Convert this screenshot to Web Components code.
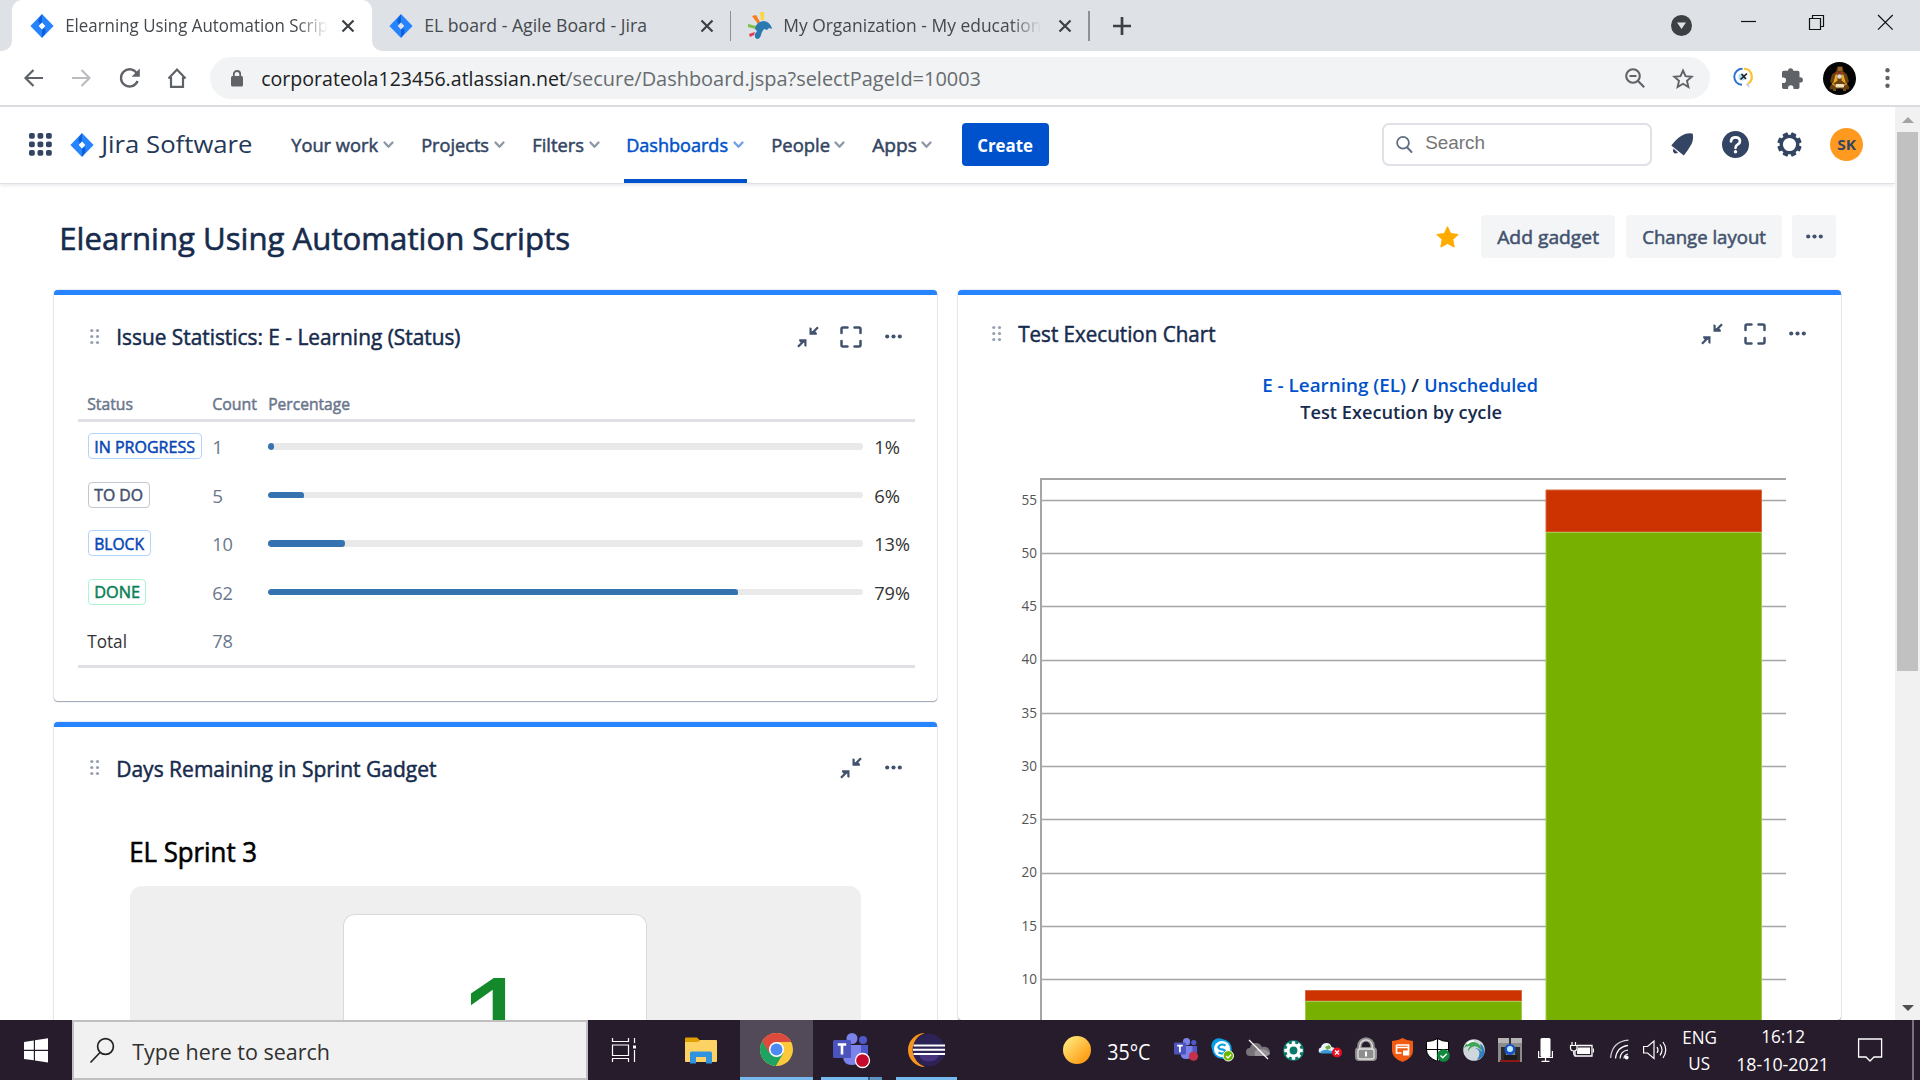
<!DOCTYPE html>
<html lang="en">
<head>
<meta charset="utf-8">
<title>Elearning Using Automation Scripts</title>
<style>
html,body{margin:0;padding:0}
body{width:1920px;height:1080px;overflow:hidden;background:#fff;font-family:"Open Sans","Noto Sans",sans-serif;color:#172b4d}
</style>
</head>
<body>
<desktop-screen></desktop-screen>
<script>
/* ---------- helpers ---------- */
const base = `*{box-sizing:border-box}svg{display:block;flex:none;overflow:visible}
.row{display:flex;align-items:center}.row>*{flex:none}.c{display:flex;align-items:center;justify-content:center}`;
function component(name, build) {
  customElements.define(name, class extends HTMLElement {
    constructor() { super(); this.attachShadow({ mode: 'open' }); }
    connectedCallback() {
      const t = document.createElement('template');
      t.innerHTML = '<style>' + base + '</style>' + build(this);
      this.shadowRoot.replaceChildren(t.content.cloneNode(true));
    }
  });
}
/* text run set to a fixed measure; weight 500 is regular with a thin outline */
const t = (text, w, size, o = {}) =>
  `<fit-text w="${w}" style="font-size:${size}px;font-weight:${o.b == 500 ? 400 : o.b || 400};${o.b == 500 ? `-webkit-text-stroke:${size > 25 ? .6 : .5}px currentColor;` : ''}${o.c ? `color:${o.c};` : ''}${o.dy ? `margin-top:${o.dy * 2}px;` : ''}${o.s || ''}">${text}</fit-text>`;
/* flex children from [start, width, html] entries, spaced by margins */
const spaced = (items, start = 0) => {
  let end = start;
  return items.map(([x, w, html]) => {
    const m = x - end; end = x + w;
    return `<div class="row" style="margin-left:${m.toFixed(1)}px;width:${w}px">${html}</div>`;
  }).join('');
};
const svg = (w, h, inner, vb) => `<svg width="${w}" height="${h}" viewBox="${vb || `0 0 ${w} ${h}`}" fill="none">${inner}</svg>`;

const jiraLogo = svg(24, 24, `<path fill="#2684ff" fill-rule="evenodd" d="M12 0 23.6 12 12 24 .4 12ZM12 8.500 8.700 12l3.300 3.500 3.300-3.500Z"/><path fill="#0f5fd8" d="M12 .6V8l-2 2.1C7.600 7.600 7.700 5 12 .6ZM12 23.400V16l2-2.100c2.400 2.500 2.300 5.100-2 9.500Z"/>`);
const closeX = svg(14, 14, `<path d="M1.500 1.500l11 11M12.500 1.500l-11 11" stroke="#3c4043" stroke-width="2.200"/>`);
const chevron = c => svg(11, 8, `<path d="M1.500 1.500 5.500 5.700l4-4.200" stroke="${c}" stroke-width="2.300" stroke-linecap="round" stroke-linejoin="round"/>`);
const dots3 = (c = '#42526e') => svg(17, 5, `<g fill="${c}"><circle cx="2.200" cy="2.500" r="2.100"/><circle cx="8.500" cy="2.500" r="2.100"/><circle cx="14.800" cy="2.500" r="2.100"/></g>`);
const drag = svg(10, 16, `<g fill="#97a0af">${[1.5, 7.5, 13.5].map(y => `<circle cx="1.800" cy="${y}" r="1.600"/><circle cx="7.500" cy="${y}" r="1.600"/>`).join('')}</g>`);
const collapse = svg(22, 22, `<g stroke="#42526e" stroke-width="2.300" stroke-linejoin="round"><path d="M21 1.200l-6 6M1 20.800l6-6"/></g><g fill="#42526e"><path d="M12.500 1.500q1.200-.4 2.200.8v3.200l3.800 0q2 1.300 1.300 3.200h-7.300ZM9.500 20.500q-1.200.4-2.200-.8v-3.200H3.500q-2-1.300-1.300-3.200h7.300Z"/></g>`);
const full = svg(22, 22, `<path d="M1.500 7V3q0-1.500 1.500-1.500h4.500M14.500 1.500H19q1.500 0 1.500 1.500v4M20.500 15v4q0 1.500-1.500 1.500h-4.500M7.500 20.500H3q-1.500 0-1.500-1.500v-4" stroke="#42526e" stroke-width="2.500" stroke-linecap="round"/>`);

/* ---------- browser tabs ---------- */
const sunLogo = svg(24, 27, `<path fill="#fdd835" d="M12 0h4v8h-3z"/><path fill="#ff7a1a" d="M4 4l4-1 4 7-2 2z"/><path fill="#7bc142" d="M0 12l8 2v3l-8-2z"/><path fill="#e53950" d="M1 22l6-2-1 3-4 2z"/><path fill="#2a7ab0" d="M7 17q1-7 8-8 7 0 9 8l-3-1-2 2-3-1-2 3-1 3q-1 4-4 4-3-1-2-5l2-3z"/>`);
component('browser-tabs', () => `<style>
:host{display:block;height:51px;background:#dee1e6}
.strip{height:51px;position:relative}
.active{width:360px;height:51px;margin-left:12px;background:#fff;border-radius:10px 10px 0 0}
.active::before,.active::after{content:"";position:absolute;bottom:0;width:10px;height:10px}
.active::before{left:2px;background:radial-gradient(circle at 0 0,transparent 9.500px,#fff 10px)}
.active::after{left:372px;background:radial-gradient(circle at 100% 0,transparent 9.500px,#fff 10px)}
.fade{padding:8px 0;-webkit-mask:linear-gradient(90deg,#000 88%,transparent);mask:linear-gradient(90deg,#000 88%,transparent)}
i{width:1.500px;height:30px;background:#8d9095}
</style><div class="row strip"><div class="row active">${spaced([
  [30, 24, jiraLogo], [66, 262, `<span class="fade row">${t('Elearning Using Automation Scrip', 262, 17.5, { c: '#45494d' })}</span>`], [341, 14, closeX]], 12)}</div>${spaced([
  [389, 24, jiraLogo], [425, 222, t('EL board - Agile Board - Jira', 222, 17.5, { c: '#45494d' })], [699.5, 14, closeX], [729.5, 2, '<i></i>'],
  [747.5, 24, sunLogo], [783.5, 257.5, `<span class="fade row">${t('My Organization - My education', 257.5, 17.5, { c: '#45494d' })}</span>`], [1058, 14, closeX], [1088, 2, '<i></i>'],
  [1113, 18, svg(18, 18, '<path d="M9 0v18M0 9h18" stroke="#3c4043" stroke-width="2.700"/>')],
  [1670.5, 21, svg(21, 21, '<circle cx="10.500" cy="10.500" r="10.500" fill="#3c4043"/><path d="M6 7.500h9l-4.500 6.500z" fill="#dee1e6"/>')],
  [1741, 15, svg(15, 15, '<path d="M0 3.500h15" stroke="#111" stroke-width="1.200"/>')],
  [1809, 15, svg(15, 22, '<path d="M.5 3.500h11v11H.5zM3.500 3.500v-3h11v11h-3" stroke="#111" stroke-width="1.200"/>')],
  [1878, 15, svg(15, 22, '<path d="M0 0l14.700 14.700M14.700 0L0 14.700" stroke="#111" stroke-width="1.200"/>')]], 372)}</div>`);

/* ---------- browser toolbar ---------- */
component('browser-toolbar', () => `<style>
:host{display:block;height:56px;background:#fff;border-bottom:2px solid #dadce0}
.bar{height:54px}.omni{height:42px;width:1500px;border-radius:21px;background:#f1f3f4}
</style><div class="row bar">${spaced([
  [23.5, 19, svg(19, 18, '<path d="M19 9H2M9.500 1 1.500 9l8 8" stroke="#5f6368" stroke-width="2.200"/>')],
  [71.5, 19, svg(19, 18, '<path d="M0 9h17M9.500 1l8 8-8 8" stroke="#bbbdc0" stroke-width="2.200"/>')],
  [118.5, 21, svg(21, 20, '<path d="M18 5.500A8.600 8.600 0 1 0 18.600 13" stroke="#5f6368" stroke-width="2.300"/><path d="M20.800.5v8.200h-8.200z" fill="#5f6368"/>')],
  [167, 20, svg(20, 20, '<path d="M1.500 10.500 10 1.500l8.500 9M4 9v9.800h12V9" stroke="#5f6368" stroke-width="2.200"/>')],
  [210, 1500, `<div class="row omni">${spaced([
    [231, 12, svg(12, 17, '<rect y="6" width="12" height="10.500" rx="1.500" fill="#5f6368"/><path d="M2.800 7V4.200a3.200 3.200 0 0 1 6.400 0V7" stroke="#5f6368" stroke-width="1.800"/>')],
    [261.5, 304, t('corporateola123456.atlassian.net', 304, 20, { c: '#202124', dy: .5 })],
    [565.5, 415, t('/secure/Dashboard.jspa?selectPageId=10003', 415, 20, { c: '#686c70', dy: .5 })],
    [1625, 20, svg(20, 20, '<circle cx="8" cy="8" r="6.800" stroke="#5f6368" stroke-width="2.100"/><path d="M4.500 8h7M12.800 12.800l6.400 6.400" stroke="#5f6368" stroke-width="2.100"/>')],
    [1672, 22, svg(22, 21, '<path d="M11 2.500l2.500 5.700 6.200.6-4.700 4.100 1.400 6.100L11 15.800 5.600 19 7 12.900 2.300 8.800l6.200-.6z" stroke="#5f6368" stroke-width="1.900"/>')]], 210)}</div>`],
  [1733.5, 20, svg(20, 22, '<path d="M8.500 1.800A8 8 0 0 0 8 17.800" stroke="#2d6fd2" stroke-width="1.900"/><path d="M10 1.800a8 8 0 0 1 4 14.800" stroke="#fbc02d" stroke-width="2.100"/><circle cx="8" cy="10" r="3.500" fill="#a9dcf7"/><path d="M6.500 12.500l6.500-6M7.500 7l4.500 5" stroke="#222" stroke-width="1.700"/><path d="M11.500 17l4 4-1-5z" fill="#c8c8c8"/>')],
  [1780.5, 22, svg(22, 23, '<path fill="#5f6368" d="M7 3.800a2.600 2.600 0 0 1 5.200 0h4.600q1.700 0 1.700 1.700v4.700h.7a2.700 2.700 0 0 1 0 5.400h-.7v4.700q0 1.700-1.700 1.700h-4.300v-1.100a2.700 2.700 0 0 0-5.400 0V22H2.700Q1 22 1 20.300v-4.200h1.300a2.800 2.800 0 0 0 0-5.600H1v-5q0-1.700 1.700-1.700z"/>')],
  [1822.5, 33, svg(33, 33, '<circle cx="16.500" cy="16.500" r="16.500" fill="#050505"/><path d="M14.500 4.500h5l1 5 3.500 3 2 7-2 2 2.500 4-1 2-9-1-9 1-1-2 2.500-4-2-2 2-7 4-3z" fill="#6b4015"/><path d="M15 5h4v4h-4z" fill="#9a6526"/><path d="M12.500 12.500h2v6l-4.500 3.500zM20.500 12.500h-2v6l4.500 3.500z" fill="#e8a91f"/><circle cx="16.500" cy="14.500" r="2.200" fill="#d9d9e5"/><circle cx="14.300" cy="11" r="1.100" fill="#c9302c"/><circle cx="18.700" cy="11" r="1.100" fill="#c9302c"/><path d="M9 21.500l3 2M24 21.500l-3 2M10 28h3M20 28h3" stroke="#d39a2e" stroke-width="1.200"/><rect x="12.500" y="22" width="8.500" height="3.500" rx="1" fill="#f2e3b8"/>')],
  [1884.5, 5, svg(5, 20, '<g fill="#5f6368"><circle cx="2.500" cy="2.200" r="2.200"/><circle cx="2.500" cy="10" r="2.200"/><circle cx="2.500" cy="17.700" r="2.200"/></g>')]])}</div>`);

/* ---------- Jira navigation ---------- */
component('nav-item', h => `<style>:host{display:block;width:100%}.row{justify-content:space-between;width:100%}</style>
<div class="row">${t(h.getAttribute('label'), h.getAttribute('w'), 17.5, { b: 500, dy: 1, c: h.hasAttribute('on') ? '#0052cc' : '#344563' })}${chevron(h.hasAttribute('on') ? '#6f9fe6' : '#8e97a8')}</div>`);
const navItem = (x, w, end, label, on) => [x, end - x, `<nav-item label="${label}" w="${w}" ${on ? 'on' : ''}></nav-item>`];
const gear = svg(25, 25, `<circle cx="12.500" cy="12.500" r="8.200" stroke="#344563" stroke-width="3.300"/>${[0, 45, 90, 135, 180, 225, 270, 315].map(a => `<rect x="9.800" y=".3" width="5.400" height="4" rx="1" fill="#344563" transform="rotate(${a + 22.5} 12.500 12.500)"/>`).join('')}`);
component('jira-nav', () => `<style>
:host{display:block;height:77px;background:#fff;border-bottom:1px solid #dfe1e6;box-shadow:0 2px 3px rgba(9,30,66,.08)}
.bar{height:75px}
.create{width:87px;height:43px;border-radius:4px;background:#0052cc}
.search{width:270px;height:43px;border:2px solid #dfe1e6;border-radius:7px}
.av{width:33px;height:33px;border-radius:50%;background:#ff991f}
.on{height:76px;border-bottom:4px solid #0052cc;padding:4px 3px 0;width:123px;margin-bottom:-1px}
</style><div class="row bar">${spaced([
  [29, 23, svg(23, 23, `<g fill="#344563">${[0, 8.5, 17].map(y => [0, 8.5, 17].map(x => `<rect x="${x}" y="${y}" width="5.800" height="5.800" rx="1.800"/>`).join('')).join('')}</g>`)],
  [69.5, 24, jiraLogo],
  [101.5, 150.5, t('Jira Software', 150.5, 24, { dy: -.5, c: '#253858' })],
  navItem(292, 86, 394, 'Your work'), navItem(421.5, 67, 505, 'Projects'), navItem(532.5, 51, 600, 'Filters'),
  [624, 123, `<div class="on row"><nav-item label="Dashboards" w="101" on style="width:117px"></nav-item></div>`],
  navItem(771.5, 58, 845, 'People'), navItem(872.5, 44, 932, 'Apps'),
  [962, 87, `<div class="create c">${t('Create', 55, 17.5, { b: 700, dy: 1, c: '#fff' })}</div>`],
  [1382, 270, `<div class="search row">${spaced([
    [1395.5, 17, svg(17, 17, '<circle cx="7" cy="6.800" r="5.900" stroke="#5e6c84" stroke-width="1.800"/><path d="M11.300 11.500l4.200 4.500" stroke="#5e6c84" stroke-width="1.900" stroke-linecap="round"/>')],
    [1426, 59, t('Search', 59, 18.66, { dy: -1.5, c: '#757575', s: "font-family:'Liberation Sans',sans-serif;" })]], 1384)}</div>`],
  [1671, 23, svg(23, 23, '<path fill="#344563" d="M.3 12.500Q7 3.500 14 1q5-1.500 7.800-.2.900 6-1.300 10.200Q17 17.500 12.800 22.500zM2.500 15.500l4.500 4.200q-3 1.700-4.400-.3-1.200-1.700-.1-3.900z"/>')],
  [1722, 27, svg(27, 27, '<circle cx="13.500" cy="13.500" r="13.500" fill="#344563"/><path d="M9 10.300q.3-4 4.500-4t4.500 3.700q0 2-2.200 3.300-2.300 1.300-2.300 3.500" stroke="#fff" stroke-width="2.700" stroke-linecap="round"/><circle cx="13.500" cy="20.700" r="1.700" fill="#fff"/>')],
  [1777, 25, gear],
  [1830, 33, `<div class="av c">${t('SK', 18, 14, { b: 700, c: '#344563' })}</div>`]])}</div>`);

/* ---------- dashboard ---------- */
component('dash-heading', () => `<style>:host{display:block;padding-top:31px}.row{height:43px}.row .row{height:auto}
.btn{width:100%;height:43px;border-radius:4px;background:#f4f5f7}</style><div class="row">${spaced([
  [60, 510, t('Elearning Using Automation Scripts', 510, 31.5, { b: 500, dy: 1.5 })],
  [1436, 23, svg(23, 22, '<path fill="#ffab00" stroke="#ffab00" stroke-width="1" stroke-linejoin="round" d="M11.500.7l3.200 6.800 7.500 1-5.400 5 1.400 7.600-6.700-3.600-6.700 3.600 1.400-7.600-5.400-5 7.500-1z"/>')],
  [1481, 134, `<div class="btn c">${t('Add gadget', 101, 17.5, { b: 500, dy: 1, c: '#42526e' })}</div>`],
  [1626, 156, `<div class="btn c">${t('Change layout', 123, 17.5, { b: 500, dy: 1, c: '#42526e' })}</div>`],
  [1792, 44, `<div class="btn c">${dots3()}</div>`]])}</div>`);

component('gadget-card', h => {
  const hh = h.getAttribute('head'), f = h.hasAttribute('full'), o = +h.getAttribute('nudge') || 0;
  return `<style>:host{display:block;border-top:5px solid #2684ff;border-radius:4px;background:#fff;box-shadow:0 1px 1px rgba(9,30,66,.35),0 0 1.500px rgba(9,30,66,.4)}
.head{height:${hh}px}</style><div class="row head">${spaced([
    [35.5 - o, 10, drag], [62.5 - o, +h.getAttribute('w'), t(h.getAttribute('label'), h.getAttribute('w'), 21, { b: 500, dy: 1.2 })],
    ...(f ? [[742.5, 22, collapse], [785.5, 22, full]] : [[785.5, 22, collapse]]), [831, 17, dots3()]])}</div><slot></slot>`;
});

component('status-row', h => {
  const a = k => h.getAttribute(k), c = a('color');
  return `<style>:host{display:block}.r{height:48.600px}
.badge{height:26px;border:1.500px solid ${a('edge')};border-radius:4px}
.track{width:595px;height:6.500px;border-radius:3.200px;background:#e9e9e9;overflow:hidden}.track div{height:7px;background:#3572b0;border-radius:3.200px;width:${a('fill')}px}</style>
<div class="row r">${spaced([
    [88, +a('bw'), c ? `<div class="badge c" style="width:${a('bw')}px">${t(a('label'), a('tw'), 15.5, { b: 500, c, dy: 1 })}</div>` : t(a('label'), a('tw'), 18.3, { c: '#333', dy: .6 })],
    [213, 20, t(a('count'), a('cw'), 18.3, { c: '#6b778c', dy: .8 })],
    ...(a('pct') ? [[268, 595, '<div class="track"><div></div></div>'], [875, 35, t(a('pct'), a('pw'), 18.3, { c: '#333', dy: .8 })]] : [])], 78)}</div>`;
});
const st = (label, tw, bw, color, edge, count, fill, pct) =>
  `<status-row label="${label}" tw="${tw}" bw="${bw}" color="${color}" edge="${edge}" count="${count}" cw="${count.length * 10}" fill="${fill}" pct="${pct}" pw="${pct.length == 3 ? 35 : 25}"></status-row>`;
component('issue-table', () => `<style>:host{display:block;padding:11px 22px 33px 24px}.h{height:33px;border-bottom:3px solid #dfe1e6}.b{border-bottom:3px solid #dfe1e6}</style>
<div class="row h">${spaced([[88, 45, t('Status', 45, 15.5, { b: 500, c: '#6b778c', dy: 1 })], [213, 44, t('Count', 44, 15.5, { b: 500, c: '#6b778c', dy: 1 })], [268.5, 81, t('Percentage', 81, 15.5, { b: 500, c: '#6b778c', dy: 1 })]], 78)}</div>
<div class="b">${st('IN PROGRESS', 100, 114, '#0747b6', '#b3d4ff', '1', 6, '1%')}${st('TO DO', 48, 62, '#42526e', '#c1c7d0', '5', 36, '6%')}${st('BLOCK', 49, 63, '#0747b6', '#b3d4ff', '10', 77, '13%')}${st('DONE', 45, 58, '#0b7f57', '#abf5d1', '62', 470, '79%')}<status-row label="Total" tw="39" bw="58" count="78" cw="20"></status-row></div>`);

component('sprint-days', () => `<style>:host{display:block;padding:0 76px}.n{height:77px}
.g{height:320px;background:#efefef;border-radius:12px;padding:28px 1px 0 0;display:flex;justify-content:center}
.w{width:304px;border:1.500px solid #dadada;border-bottom:0;border-radius:12px 12px 0 0;background:#fff;padding:41px 0 0 3px;text-align:center;font:140px/140px "Liberation Sans",sans-serif;color:#14892c}</style>
<div class="row n">${t('EL Sprint 3', 127, 26.5, { b: 500, dy: 5, c: '#000' })}</div><div class="g"><div class="w">1</div></div>`);

component('execution-chart', () => {
  let g = '';
  for (let i = 0; i < 10; i++) {
    const y = 500.5 + i * 53.22, v = 55 - i * 5;
    g += `<path d="M1041 ${Math.round(y - .5) + .5}H1786" stroke="#a5a5a5" stroke-width="1.300"/><text x="1037" y="${y + 4.3}" text-anchor="end" textLength="15.500" lengthAdjust="spacingAndGlyphs">${v}</text>`;
  }
  return `<style>:host{display:block}.l{height:27px}text{font:14px "Open Sans",sans-serif;fill:#545454}</style>
<div class="c l" style="padding-left:2px">${t('E - Learning (EL)', 143, 17.5, { b: 600, c: '#0052cc', s: 'margin-right:6px;' })}${t('/', 7, 17.5, { b: 600, s: 'margin-right:6px;' })}${t('Unscheduled', 113, 17.5, { b: 600, c: '#0052cc' })}</div>
<div class="c l" style="padding-left:3px">${t('Test Execution by cycle', 201, 17.5, { b: 600 })}</div>
${svg(883, 594, `${g}<path d="M1786 479H1041V1025" stroke="#a5a5a5" stroke-width="2"/>
<g stroke-width="1"><path d="M1305.500 990.500h216v10.500h-216z" fill="#cc3300" stroke="#d66a3f"/><path d="M1305.500 1001.500h216v30h-216z" fill="#77b000" stroke="#a3c94f"/>
<path d="M1546 490h215.500v42h-215.500z" fill="#cc3300" stroke="#d66a3f"/><path d="M1546 532.500h215.500v500h-215.500z" fill="#77b000" stroke="#a3c94f"/></g>`, '958 426 883 594')}`;
});

component('jira-page', () => `<style>
:host{display:flex;height:913px;overflow:hidden;background:#fff}
main{width:1895px;height:913px;overflow:hidden}
.cols{display:flex;gap:21px;padding:32px 0 0 54px}
.col{width:883px;display:flex;flex-direction:column;gap:21px}
.scroll{width:25px;height:913px;background:#f1f1f1;display:flex;flex-direction:column;align-items:center;padding:10px 0 9px}
.thumb{width:21px;height:539px;background:#c1c1c1;margin:9px 0 auto}
</style><main><jira-nav></jira-nav><dash-heading></dash-heading>
<div class="cols"><div class="col">
<gadget-card head="83" full label="Issue Statistics: E - Learning (Status)" w="343.5"><issue-table></issue-table></gadget-card>
<gadget-card head="82" label="Days Remaining in Sprint Gadget" w="319.5"><sprint-days></sprint-days></gadget-card>
</div><div class="col"><gadget-card head="77" full nudge="2" label="Test Execution Chart" w="196.5"><execution-chart></execution-chart></gadget-card></div></div></main>
<div class="scroll">${svg(12, 6, '<path d="M6 0l6 6H0z" fill="#a3a3a3"/>')}<div class="thumb"></div>${svg(12, 6, '<path d="M0 0h12L6 6z" fill="#505050"/>')}</div>`);

/* ---------- taskbar ---------- */
const teams = (s, dot) => svg(37 * s, 35 * s, `<circle cx="30" cy="7" r="4" fill="#5059c9"/><circle cx="19" cy="5.500" r="5.500" fill="#7b83eb"/><path d="M24 12h11v11q0 5-5 5h-6z" fill="#5059c9"/><path d="M10 12h18v11q0 9-9 9t-9-9z" fill="#7b83eb"/><rect y="7" width="18" height="18" rx="1.500" fill="#4b53bc"/><path d="M4.800 11.500h8.400M9 11.500v10" stroke="#fff" stroke-width="2.600"/><circle cx="29.500" cy="27.500" r="7" fill="${dot}" ${s == 1 ? 'stroke="#fff" stroke-width="1.300"' : ''}/>`, '0 0 37 35');
const chrome = svg(33, 33, `<circle cx="16.500" cy="16.500" r="16.500" fill="#fbc93c"/><path d="M16.500 16.500 2.200 8.200A16.500 16.500 0 0 0 15.800 33l7.500-12.700z" fill="#1ea362"/><path d="M2.200 8.300A16.500 16.500 0 0 1 31.200 9H16.500l-7.300 11z" fill="#dd4b3e"/><circle cx="16.500" cy="16.500" r="7.600" fill="#fff"/><circle cx="16.500" cy="16.500" r="6" fill="#4c8bf5"/>`);
component('task-bar', () => `<style>
:host{display:block;height:60px;background:#271c2c;color:#fff}
.bar{height:60px}
.search{width:516px;height:60px;background:#f1f1f1;border:2px solid #c0c0c0}
.app{height:60px;display:flex;flex-direction:column;align-items:center;justify-content:space-between;width:100%}
.app b{height:3px;width:100%;background:#76b9ed;display:block}.app div{flex:1;display:flex;align-items:center}
.two b{background:linear-gradient(90deg,#76b9ed 47px,#3f5f80 47px,#3f5f80 49px,#5e93c0 49px)}
.stack{display:flex;flex-direction:column;align-items:center;gap:11px;width:100%;padding-top:1px}
</style><div class="row bar">${spaced([
  [24, 24, svg(24, 25, '<path fill="#fff" d="M0 4l9.800-1.500v9.300H0zM11 2.300 24 .3v11.500H11zM0 13h9.800v9.300L0 21zM11 13h13v11.600l-13-2z"/>')],
  [72, 516, `<div class="search row">${spaced([
    [90, 25, svg(25, 25, '<circle cx="15.500" cy="8.500" r="7.900" stroke="#222" stroke-width="1.700"/><path d="M10 14.500.5 24.500" stroke="#222" stroke-width="1.700"/>')],
    [132.5, 197, t('Type here to search', 197, 22, { dy: .8, c: '#303030' })]], 74)}</div>`],
  [612, 24, svg(24, 24, '<g stroke="#fff" stroke-width="1.200"><path d="M.5 0v3.500h16V0M.5 7h16v10.500H.5zM.5 24v-3.500h16V24M22.500 0v5M22.500 12v12"/></g><path d="M21 7.500h3v3h-3z" fill="#fff"/>')],
  [685, 32, svg(32, 27, '<path d="M0 1.500Q0 .5 1 .5h11l3 3V6H0z" fill="#e0a000"/><path d="M0 5h13l2-2h16q1 0 1 1v20q0 1-1 1H1q-1 0-1-1z" fill="#fdd264"/><path d="M5 26.500V16q0-1.500 1.500-1.500h19Q27 14.500 27 16v10.500h-6V20H11v6.500z" fill="#2f93e0"/>')],
  [740, 73, `<div class="app" style="background:#524a58"><div style="padding:2px 0 0 0">${chrome}</div><b></b></div>`],
  [821, 61, `<div class="app two"><div style="padding:4px 0 0">${teams(1, '#c4092b')}</div><b></b></div>`],
  [896, 61, `<div class="app"><div style="padding-top:2px">${svg(36, 34, '<path d="M16 0A17 17 0 0 0 16 34Q5 30 4.500 17T16 0z" fill="#f7941e"/><circle cx="19.800" cy="17" r="16.200" fill="#2c2255"/><path d="M10 22h20q-2 6.500-10 6.500T10 22z" fill="#46327d"/><path d="M4.500 12.500h31.500M4 16.700h32M4.500 21h31.500" stroke="#fff" stroke-width="1.900"/>')}</div><b></b></div>`],
  [1063, 28, svg(28, 28, '<defs><linearGradient id="s" x1="0" y1="0" x2="1" y2="1"><stop offset=".1" stop-color="#ffe97a"/><stop offset="1" stop-color="#ff8c00"/></linearGradient></defs><circle cx="14" cy="14" r="14" fill="url(#s)"/>')],
  [1108, 42.5, t('35°C', 42.5, 21, { dy: 2 })],
  [1174, 24, teams(.66, '#c4314b')],
  [1211, 23, svg(23, 24, '<circle cx="8" cy="8" r="7.700" fill="#0a9fe3"/><circle cx="11" cy="11" r="9.800" fill="#0a9fe3"/><circle cx="11" cy="11" r="8" fill="#fff"/><path d="M14.500 7.500q-3.500-2-6 0t.5 3.500l3 .6q3 1 1.500 3-2.500 2-6-.3" stroke="#0a9fe3" stroke-width="2.200"/><circle cx="17.300" cy="17.800" r="5.200" fill="#6bb700" stroke="#fff"/><path d="M15 18l2 2 3-3.500" stroke="#fff" stroke-width="1.300"/>')],
  [1246, 24, svg(24, 20, '<path d="M4 16a4 4 0 0 1 0-8q1-5 6-5 4 0 6 4 7-1 8 5 0 4-4 4z" fill="#777379"/><path d="M9 16q-2-7 5-7t10 5l-3 2z" fill="#99969b"/><path d="M3 0l19 19" stroke="#fff" stroke-width="1.300"/>')],
  [1283, 21, svg(21, 21, `<circle cx="10.500" cy="10.500" r="10.500" fill="#0b7a6d"/><circle cx="10.500" cy="10.500" r="5.500" stroke="#fff" stroke-width="3.200"/>${[0, 45, 90, 135, 180, 225, 270, 315].map(a => `<rect x="8.800" y="1.300" width="3.400" height="3.500" fill="#fff" transform="rotate(${a} 10.500 10.500)"/>`).join('')}`)],
  [1318, 24, svg(24, 16, '<path d="M2 11a3 3 0 0 1 1-5.500Q4 1 8.500 1q4 0 5 4 4.500 0 4 6z" fill="#e8f4fb"/><path d="M2 10q4-3 8-2t7 2l-2 1.500H3z" fill="#3a9bdc"/><path d="M7 5l4-2 2 3-4 2z" fill="#6fae3c"/><circle cx="19" cy="10.500" r="5" fill="#e81123"/><path d="M17 8.500l4 4M21 8.500l-4 4" stroke="#fff" stroke-width="1.300"/>')],
  [1355, 22, svg(22, 24, '<path d="M4.500 11V8a6.500 6.500 0 0 1 13 0v3" stroke="#8e8e8e" stroke-width="4.500"/><rect y="9" width="22" height="14" rx="4" fill="#8e8e8e"/><path d="M4.800 11V8a6.200 6.200 0 0 1 12.400 0v3" stroke="#e4e4e4" stroke-width="1.300"/><rect x="3" y="11" width="16" height="10" rx="2" stroke="#e4e4e4" stroke-width="1.300"/><path d="M11 13.500v5" stroke="#fff" stroke-width="2"/>')],
  [1392, 21, svg(21, 24, '<path d="M10.500 0q5 3 10.500 3v10q0 7-10.500 11Q0 20 0 13V3q5.500 0 10.500-3z" fill="#f15a10"/><path d="M4.500 7h12v9h-5M4.500 7v8h5M4.500 9.500h12" stroke="#fff" stroke-width="1.700"/><rect x="11" y="12.500" width="6" height="5" fill="#fff"/>')],
  [1426, 24, svg(24, 24, '<path d="M11.500.5Q16 3.500 22.500 3.500V12q0 7-11 11.500Q.5 19 .5 12V3.500Q7 3.500 11.500.5z" fill="#fff" stroke="#000"/><path d="M11.500 0v23M0 11.500h23" stroke="#000" stroke-width="1.200"/><circle cx="17.500" cy="17.500" r="6.300" fill="#10893e"/><path d="M14.500 17.500l2.300 2.300 4-4" stroke="#fff" stroke-width="1.400"/>')],
  [1463, 22, svg(22, 22, '<circle cx="11" cy="11" r="10.800" fill="#cfd6dc"/><path d="M1 9Q4 1.500 11 3q8 2 7.500 9-4-5.500-8-4.500T5 13q0-4 2-6-3-.5-6 2z" fill="#3fa557"/><path d="M12 9q6 2 4 8l-2 4q6-2 7.500-7Q21 6 17 5l2 8q-3-4-7-4z" fill="#2e7fc1"/><path d="M4 5q3-3 7-3" stroke="#fff" stroke-width="1.500"/>')],
  [1498, 24, svg(24, 24, '<path d="M0 0h24v24H0z" fill="#8c8c8c"/><path d="M0 0h24v5H0z" fill="#b5b5b5"/><path d="M3 9h5v14H3zM17 9h5v14h-5z" fill="#2c2c2c"/><path d="M6 17h13v5H6z" fill="#1c1c1c"/><path d="M2 23h20" stroke="#8c1818" stroke-width="2"/><circle cx="12" cy="11.500" r="5.500" fill="#1653c4"/><circle cx="12" cy="11" r="3" fill="#bfe8ff"/><path d="M12 0v6" stroke="#333" stroke-width="2"/>')],
  [1538, 15, svg(15, 24, '<rect x="2.500" width="10" height="19" rx="1.500" fill="#fff"/><path d="M.6 13v6.500h13.800V13M7.500 19.500v4M3.500 23.300h8" stroke="#fff" stroke-width="1.200"/>')],
  [1570, 24, svg(24, 16, '<path d="M7 3.500h15V14H5V9" stroke="#fff" stroke-width="1.300"/><path d="M8 5.500h12v6.500H7V9z" fill="#fff"/><path d="M23.500 6.500v4" stroke="#fff"/><path d="M.5 3.500h6.500v2.500q0 3-3.200 3T.5 6zM2 3.500V0M5.500 3.500V0M3.700 9v3q0 1.500 2 1.500" stroke="#fff" stroke-width="1.200"/>')],
  [1610, 19, svg(19, 22, '<g stroke="#fff" stroke-width="1.200"><path d="M.6 19Q2 2.500 18.500 1.200" opacity=".8"/><path d="M5.500 19.500Q6.500 8 18 6.300M10 19.500q.5-7.500 8-8.500M14 19.500q0-3.500 4-4.500"/></g><circle cx="16.700" cy="18.500" r="1.900" fill="#fff"/>')],
  [1643, 23, svg(23, 20, '<path d="M.6 6.500h4L11 1v17.500l-6.400-5.500h-4zM14 7q2 3 0 5.800M17 4.500q4 5.300 0 10.800M20 2q5.500 7.700 0 16" stroke="#fff" stroke-width="1.200"/>')],
  [1682.5, 34, `<div class="stack">${t('ENG', 34, 17.5)}${t('US', 21, 17.5, { s: 'margin-top:-2px;' })}</div>`],
  [1736.5, 93, `<div class="stack">${t('16:12', 43, 17.5)}${t('18-10-2021', 92, 17.5, { s: 'margin-top:-1px;' })}</div>`],
  [1858, 24, svg(24, 24, '<path d="M.6 1h23v18H16l-4 4-4-4H.6z" stroke="#fff" stroke-width="1.300"/>')],
  [1912, 2, '<div style="width:1.500px;height:60px;background:#78717c"></div>']])}</div>`);

component('desktop-screen', () => `<style>:host{display:flex;flex-direction:column;width:1920px;height:1080px}</style>
<browser-tabs></browser-tabs><browser-toolbar></browser-toolbar><jira-page></jira-page><task-bar></task-bar>`);

/* sets its slotted text to an exact width */
customElements.define('fit-text', class extends HTMLElement {
  constructor() {
    super();
    this.attachShadow({ mode: 'open' }).innerHTML = `<style>:host{display:block;flex:none;white-space:nowrap;line-height:1}
span{display:inline-block;transform-origin:0 50%;white-space:pre}</style><span><slot></slot></span>`;
  }
  connectedCallback() {
    const w = +this.getAttribute('w'), s = this.shadowRoot.querySelector('span');
    this.style.width = w + 'px';
    const fit = () => { s.style.transform = ''; const n = s.getBoundingClientRect().width; if (n) s.style.transform = `translateX(-.8px) scaleX(${(w + .8) / n})`; };
    this.style.height = this.style.fontSize;
    fit();
    document.fonts.ready.then(fit);
  }
});
</script>
</body>
</html>
